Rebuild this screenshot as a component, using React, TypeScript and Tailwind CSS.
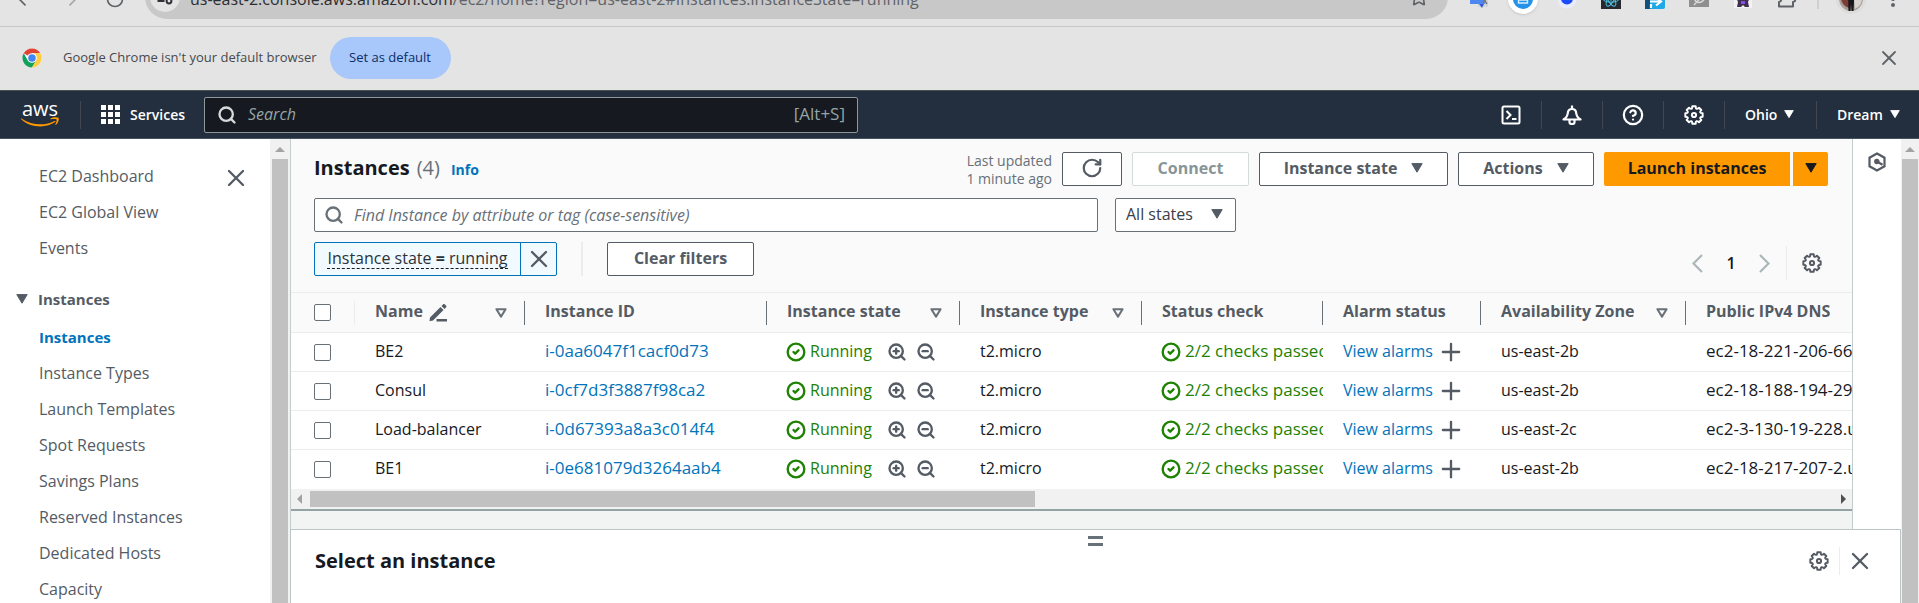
import React from 'react';
import {
  ArrowLeft,
  ArrowRight,
  CircleCheck,
  CircleHelp,
  Plus,
  Puzzle,
  RotateCw,
  Search,
  Star,
  X,
  ZoomIn,
  ZoomOut,
} from 'lucide-react';

const instances = [
  { name: 'BE2', id: 'i-0aa6047f1cacf0d73', zone: 'us-east-2b', dns: 'ec2-18-221-206-66.us-east-2.compute' },
  { name: 'Consul', id: 'i-0cf7d3f3887f98ca2', zone: 'us-east-2b', dns: 'ec2-18-188-194-29.us-east-2.compute' },
  { name: 'Load-balancer', id: 'i-0d67393a8a3c014f4', zone: 'us-east-2c', dns: 'ec2-3-130-19-228.us-east-2.compute' },
  { name: 'BE1', id: 'i-0e681079d3264aab4', zone: 'us-east-2b', dns: 'ec2-18-217-207-2.us-east-2.compute' },
];

const columns = [
  { label: 'Name', width: 'w-[170px]', filter: true, edit: true },
  { label: 'Instance ID', width: 'w-[242px]' },
  { label: 'Instance state', width: 'w-[193px]', filter: true },
  { label: 'Instance type', width: 'w-[182px]', filter: true },
  { label: 'Status check', width: 'w-[181px]' },
  { label: 'Alarm status', width: 'w-[158px]' },
  { label: 'Availability Zone', width: 'w-[205px]', filter: true },
  { label: 'Public IPv4 DNS', width: 'w-[300px]' },
];

const mainLinks = ['EC2 Dashboard', 'EC2 Global View', 'Events'];
const instanceLinks = [
  'Instances',
  'Instance Types',
  'Launch Templates',
  'Spot Requests',
  'Savings Plans',
  'Reserved Instances',
  'Dedicated Hosts',
  'Capacity',
];

// Eight rounded lobes around a ring.
const gearPath = (() => {
  const at = (deg: number, r: number) => {
    const a = (deg * Math.PI) / 180;
    return `${(10 + r * Math.cos(a)).toFixed(2)} ${(10 + r * Math.sin(a)).toFixed(2)}`;
  };
  let d = `M${at(-11, 8.8)}`;
  for (let i = 0; i < 8; i += 1) {
    const c = i * 45;
    d += `L${at(c + 11, 8.8)}Q${at(c + 22.5, 4.8)} ${at(c + 34, 8.8)}`;
  }
  return `${d}Z`;
})();

function Gear({ className = '' }: { className?: string }) {
  return (
    <svg viewBox="0 0 20 20" className={`size-5 ${className}`} fill="none" stroke="currentColor" strokeWidth="2" strokeLinejoin="round" aria-hidden="true">
      <path d={gearPath} />
      <circle cx="10" cy="10" r="2.1" />
    </svg>
  );
}

function Caret({ className = 'w-3' }: { className?: string }) {
  return (
    <svg viewBox="0 0 12 10" className={className} fill="currentColor" stroke="currentColor" strokeLinejoin="round" aria-hidden="true">
      <path d="M.8.6h10.4L6 9.2z" />
    </svg>
  );
}

function FilterMark() {
  return (
    <svg viewBox="0 0 12 10" className="w-3 shrink-0 text-[#687078]" fill="none" stroke="currentColor" strokeWidth="2" strokeLinejoin="round" aria-hidden="true">
      <path d="M1.4 1.2h9.2L6 8.6z" />
    </svg>
  );
}

function PageArrow({ d }: { d: string }) {
  return (
    <svg viewBox="0 0 11 19" className="h-[19px] w-[11px]" fill="none" stroke="currentColor" strokeWidth="2.2" aria-hidden="true">
      <path d={d} />
    </svg>
  );
}

function ChromeLogo() {
  return (
    <svg viewBox="0 0 48 48" className="size-5" aria-hidden="true">
      <circle cx="24" cy="24" r="23" fill="#fff" />
      <path d="M24 24 4.1 12.5A23 23 0 0 1 43.9 12.5H24z" fill="#e04234" />
      <path d="M4.1 12.5A23 23 0 0 0 24 47l10-17.2L24 24l-10 5.8z" fill="#12a15c" />
      <path d="M43.9 12.5A23 23 0 0 1 24 47l10-17.2L32 14.5l-8-2z" fill="#ffcd40" />
      <circle cx="24" cy="24" r="11.5" fill="#fff" />
      <circle cx="24" cy="24" r="9" fill="#4285f4" />
    </svg>
  );
}

function BrowserToolbar() {
  return (
    <div className="flex h-[27px] shrink-0 flex-col justify-end overflow-hidden border-b border-[#c6c6c6] bg-[#e4e4e4]">
      <div className="flex h-[54px] shrink-0 items-center text-[#5f6368]">
        <div className="flex w-[145px] items-center gap-[25px] pl-[15px]">
          <ArrowLeft className="size-5" />
          <ArrowRight className="size-5 text-[#a8a8a8]" />
          <RotateCw className="size-5" />
        </div>
        <div className="mb-1 flex h-11 flex-1 items-center rounded-full bg-[#c8c8c8] pl-[5px] pr-[19px]">
          <span className="mr-[10px] flex size-[30px] items-center justify-center rounded-full bg-[#e4e4e4] text-[#303236]">
            <svg viewBox="0 0 20 20" className="size-5" fill="none" stroke="currentColor" strokeWidth="2" aria-hidden="true">
              <circle cx="6" cy="6" r="2.4" />
              <path d="M10.5 6h7M2.5 14h7" />
              <circle cx="14" cy="14" r="2.4" />
            </svg>
          </span>
          <span className="flex-1 whitespace-nowrap pt-1 text-[16px] leading-6">
            <span className="text-[#2c2e31]">us-east-2.console.aws.amazon.com</span>
            /ec2/home?region=us-east-2#Instances:instanceState=running
          </span>
          <Star className="size-5" />
        </div>
        <div className="flex items-center pl-[9px]">
          <span className="flex w-11 justify-center">
            <svg viewBox="0 0 20 20" className="size-5" aria-hidden="true">
              <path d="M7 5h12v13H9z" fill="#d4d6da" />
              <path d="M1 1h12l3 14H1z" fill="#4d87f2" />
              <path d="m10 15 5 0-2 4z" fill="#2f5fd0" />
              <path d="m14 9 4 6m0-6-4 5" stroke="#777" strokeWidth="1.5" />
            </svg>
          </span>
          <span className="flex w-11 justify-center">
            <span className="flex size-[30px] items-center justify-center rounded-full bg-white shadow">
              <svg viewBox="0 0 20 20" className="size-5" aria-hidden="true">
                <circle cx="10" cy="10" r="10" fill="#2492e6" />
                <path d="M5.5 4h9v10h-9zM5.5 7.5h9M5.5 11h9" fill="none" stroke="#d6edff" strokeWidth="1.4" />
              </svg>
            </span>
          </span>
          <span className="flex w-11 justify-center">
            <svg viewBox="0 0 20 20" className="size-5" aria-hidden="true">
              <circle cx="10" cy="10" r="9.5" fill="#e8ecfb" />
              <circle cx="10" cy="9.500" r="6" fill="#1b4dfa" />
            </svg>
          </span>
          <span className="flex w-11 justify-center">
            <svg viewBox="0 0 20 20" className="size-5" fill="none" stroke="#4fc6e8" aria-hidden="true">
              <path d="M0 0h20v20H0z" fill="#26292e" stroke="none" />
              <ellipse cx="10" cy="10" rx="8" ry="3.2" />
              <ellipse cx="10" cy="10" rx="8" ry="3.2" transform="rotate(60 10 10)" />
              <ellipse cx="10" cy="10" rx="8" ry="3.2" transform="rotate(120 10 10)" />
              <circle cx="10" cy="10" r="1.2" />
            </svg>
          </span>
          <span className="flex w-11 justify-center">
            <svg viewBox="0 0 20 20" className="size-5" aria-hidden="true">
              <rect width="20" height="20" rx="2" fill="#1ea8e8" />
              <path d="M0 0h5v20H0z" fill="#124f7c" />
              <path d="M5 12.500h10m-4-4 5 4-5 4M6 15v4" fill="none" stroke="#fff" strokeWidth="2.2" />
            </svg>
          </span>
          <span className="flex w-11 justify-center">
            <svg viewBox="0 0 20 20" className="size-5" aria-hidden="true">
              <path d="M0 0h20v18H0z" fill="#8f8f8f" />
              <path d="m5 16 9-10M6 10c0 4 5 5 9 1" fill="none" stroke="#d9d9d9" strokeWidth="1.5" />
            </svg>
          </span>
          <span className="flex w-11 justify-center">
            <svg viewBox="0 0 20 20" className="size-5" aria-hidden="true">
              <path d="M1 0h18v19H1z" fill="#f3f1f4" />
              <path d="m3 8 7 2 7-2-2 5 1 5h-4l-2-2-2 2H4l1-5z" fill="#3d2f4f" />
              <path d="M8 12h4v3H8z" fill="#8a4be0" />
            </svg>
          </span>
          <span className="flex w-11 justify-center">
            <svg viewBox="0 0 20 20" className="size-5" fill="none" stroke="currentColor" strokeWidth="2" strokeLinejoin="round" aria-hidden="true">
              <path d="M2 17.500V13c3-.5 3-4.500 0-5V4h4.500c.5-3 4.500-3 5 0H16v4.500c3 .5 3 4 0 4.500v4.500z" />
            </svg>
          </span>
          <span className="ml-2 h-5 w-[2px] bg-[#cfcfcf]" />
          <span className="ml-[17px] flex size-[30px] items-center justify-center rounded-full bg-[#dcdcdc]">
            <svg viewBox="0 0 24 24" className="size-6" aria-hidden="true">
              <circle cx="12" cy="12" r="12" fill="#a99e98" />
              <path d="M2 12h8v9a12 12 0 0 1-8-9z" fill="#7d3b36" />
              <path d="M15 12h8a12 12 0 0 1-7 10z" fill="#d8d2cf" />
              <path d="M9 6h6v9l-.5 9h-2l-.5-7-.5 7h-2z" fill="#16171a" />
            </svg>
          </span>
          <span className="flex w-[53px] justify-center">
            <svg viewBox="0 0 4 20" className="h-5 w-1" fill="currentColor" aria-hidden="true">
              <circle cx="2" cy="4" r="2" />
              <circle cx="2" cy="10" r="2" />
              <circle cx="2" cy="16" r="2" />
            </svg>
          </span>
        </div>
      </div>
    </div>
  );
}

function DefaultBrowserBar() {
  return (
    <div className="flex h-[63px] shrink-0 items-center bg-[#e4e4e4] pb-px pl-[22px] pr-[18px]">
      <ChromeLogo />
      <span className="ml-[21px] text-[13px] text-[#47494d]">Google Chrome isn't your default browser</span>
      <button className="ml-[13px] h-[42px] w-[121px] rounded-full bg-[#a8c7fa] text-[13px] font-medium text-[#0b2e6b]">Set as default</button>
      <button className="ml-auto text-[#5f6368]" aria-label="Dismiss">
        <X className="size-6" strokeWidth={1.8} />
      </button>
    </div>
  );
}

function NavCell({ children, label }: { children: React.ReactNode; label: string }) {
  return (
    <button className="flex h-7 w-[61px] items-center justify-center border-r border-[#414750]" aria-label={label}>
      {children}
    </button>
  );
}

function ConsoleNav() {
  return (
    <header className="flex h-[49px] shrink-0 items-center border-y border-t-[#4a5350] border-b-[#46525f] bg-[#232f3e] text-white">
      <a href="#home" className="flex h-7 w-[81px] flex-col items-center border-r border-[#414750]" aria-label="Console home">
        <span className="text-[20px] leading-4">aws</span>
        <svg viewBox="0 0 38 10" className="w-[38px]" aria-hidden="true">
          <path d="M0 1.2c11 7.500 24 7.800 33.500 2.800.9-.4 1.500.5.700 1.100C25 11.500 9.500 11 .2 2.200c-.6-.6-.6-1.200-.2-1z" fill="#ff9900" />
          <path d="M29.500 1.600c2-1.400 6.500-1.700 8-.8.900.9-.2 5.300-2.600 7-.4.300-.8.100-.6-.3.600-1.300 1.700-4 1.200-4.900-.6-.8-3.800-.4-5.500-.4-.5-.1-.9-.3-.5-.6z" fill="#ff9900" />
        </svg>
      </a>
      <button className="flex items-center gap-[10px] pl-5 text-[14px] font-semibold">
        <svg viewBox="0 0 19 19" className="size-[19px]" fill="currentColor" aria-hidden="true">
          <path d="M0 0h5v5H0zM7 0h5v5H7zM14 0h5v5h-5zM0 7h5v5H0zM7 7h5v5H7zM14 7h5v5h-5zM0 14h5v5H0zM7 14h5v5H7zM14 14h5v5h-5z" />
        </svg>
        <span className="w-16 pb-px text-left">Services</span>
      </button>
      <label className="ml-[10px] flex h-9 w-[654px] items-center rounded-[2px] border border-[#8d9998] bg-[#16191f] px-3">
        <Search className="size-5 shrink-0 text-[#d5dbdb]" strokeWidth={2.8} />
        <input type="search" placeholder="Search" aria-label="Search services" className="ml-[11px] min-w-0 flex-1 bg-transparent pb-px text-[16px] italic outline-none placeholder:text-[#95a5a6]" />
        <span className="pb-px text-[17px] text-[#95a5a6]">[Alt+S]</span>
      </label>
      <div className="ml-auto flex items-center">
        <NavCell label="CloudShell">
          <svg viewBox="0 0 20 20" className="size-5" fill="none" stroke="currentColor" strokeWidth="2" aria-hidden="true">
            <rect x="1.5" y="1.5" width="17" height="17" rx="1.5" />
            <path d="m5.500 6 4 4-4 4M11 14h4.500" />
          </svg>
        </NavCell>
        <NavCell label="Notifications">
          <svg viewBox="0 0 20 20" className="size-5" fill="none" stroke="currentColor" strokeWidth="2.2" strokeLinejoin="round" aria-hidden="true">
            <path d="M1.500 14.500c2.500-1.500 4-3.500 4.300-6.500.2-2.500 1.700-4 4.200-4s4 1.500 4.200 4c.3 3 1.800 5 4.300 6.500zM10 .5V4" />
            <path d="M7.500 15v2.500c0 .8.800 1.500 2.500 1.500s2.500-.7 2.500-1.500V15" />
          </svg>
        </NavCell>
        <NavCell label="Help">
          <CircleHelp className="size-[22px]" strokeWidth={2.4} />
        </NavCell>
        <NavCell label="Settings">
          <Gear />
        </NavCell>
        <button className="flex h-7 w-[92px] items-center gap-[7px] border-r border-[#414750] pb-px pl-5 text-[14px] font-semibold">
          Ohio <Caret className="w-[10px]" />
        </button>
        <button className="flex h-7 w-[102px] items-center gap-[7px] pb-px pl-5 text-[14px] font-semibold">
          Dream <Caret className="w-[10px]" />
        </button>
      </div>
    </header>
  );
}

function VerticalScrollbar({ className }: { className: string }) {
  return (
    <div className={`flex shrink-0 flex-col items-center overflow-hidden bg-[#f1f1f1] ${className}`}>
      <span className="flex h-5 shrink-0 items-center text-[#a3a3a3]">
        <svg viewBox="0 0 10 5" className="w-[10px]" fill="currentColor" aria-hidden="true">
          <path d="M0 5 5 0l5 5z" />
        </svg>
      </span>
      <span className="w-4 flex-1 bg-[#c1c1c1]" />
    </div>
  );
}

function Sidebar() {
  return (
    <nav className="w-[270px] shrink-0 overflow-hidden bg-white pt-[25px] text-[16px] leading-6 text-[#545b64]">
      <div className="flex items-start justify-between pl-[39px] pr-5">
        <ul className="flex flex-col gap-3">
          {mainLinks.map((label) => (
            <li key={label}>
              <a href="#nav">{label}</a>
            </li>
          ))}
        </ul>
        <button aria-label="Close navigation">
          <X className="size-7" strokeWidth={2} />
        </button>
      </div>
      <button className="mt-[27px] flex items-center gap-[10px] pl-4 text-[15px] font-bold leading-6">
        <Caret /> Instances
      </button>
      <ul className="mt-[14px] flex flex-col gap-3 pl-[39px]">
        {instanceLinks.map((label, i) => (
          <li key={label}>
            <a href="#nav" className={i === 0 ? 'text-[15px] font-bold text-[#0073bb]' : ''}>
              {label}
            </a>
          </li>
        ))}
      </ul>
    </nav>
  );
}

const outlined = 'flex h-[34px] items-center justify-center rounded-[2px] border border-[#545b64] bg-white pb-[3px] text-[16px] font-bold text-[#545b64]';

function Toolbar() {
  return (
    <div className="flex flex-col bg-[#fafafa] pb-3 pl-[23px] pr-6 pt-[13px]">
      <div className="flex h-[34px] items-start justify-between">
        <h1 className="flex items-baseline text-[20px] font-bold leading-8 text-[#16191f]">
          Instances <span className="ml-[7px] font-normal text-[#687078]">(4)</span>
          <a href="#info" className="ml-[11px] text-[14px] text-[#0073bb]">
            Info
          </a>
        </h1>
        <div className="flex items-start gap-[10px]">
          <p className="text-right text-[14px] leading-[18px] text-[#687078]">
            Last updated
            <br />1 minute ago
          </p>
          <button className={`${outlined} w-[60px]`} aria-label="Refresh">
            <RotateCw className="size-[22px]" strokeWidth={2.4} />
          </button>
          <button disabled className="h-[34px] w-[117px] rounded-[2px] border border-[#d5dbdb] bg-white pb-[3px] text-[16px] font-bold text-[#879596]">
            Connect
          </button>
          <button className={`${outlined} w-[189px] gap-[14px]`}>
            Instance state <Caret />
          </button>
          <button className={`${outlined} w-[136px] gap-[14px]`}>
            Actions <Caret />
          </button>
          <div className="flex gap-[3px] text-[#16191f]">
            <button className="h-[34px] w-[186px] rounded-l-[2px] bg-[#ff9900] pb-[3px] text-[16px] font-bold">Launch instances</button>
            <button className="flex h-[34px] w-[35px] items-center justify-center rounded-r-[2px] bg-[#ff9900] pb-[3px]" aria-label="More launch options">
              <Caret />
            </button>
          </div>
        </div>
      </div>
      <div className="mt-3 flex gap-[17px]">
        <label className="flex h-[34px] w-[784px] items-center rounded-[2px] border border-[#687078] bg-white px-[9px]">
          <Search className="size-5 shrink-0 text-[#687078]" strokeWidth={2.8} />
          <input type="search" aria-label="Find Instance" placeholder="Find Instance by attribute or tag (case-sensitive)" className="ml-[10px] min-w-0 flex-1 bg-transparent pb-px text-[16px] italic outline-none placeholder:text-[#687078]" />
        </label>
        <div className="relative">
          <select aria-label="Instance states" className="h-[34px] w-[121px] appearance-none rounded-[2px] border border-[#687078] bg-white pb-[2px] pl-[10px] text-[16px] text-[#3a4048] outline-none">
            <option>All states</option>
          </select>
          <Caret className="pointer-events-none absolute right-[13px] top-[11px] w-3 text-[#545b64]" />
        </div>
      </div>
      <div className="mt-[10px] flex h-[38px] items-start">
        <div className="flex h-[34px] items-center rounded-[2px] border border-[#0073bb] bg-[#f1faff]">
          <button className="flex h-full w-[205px] items-center justify-center pb-px text-[16px] text-[#2c323a]">
            <span className="whitespace-nowrap border-b border-dashed border-[#16191f] leading-5">
              Instance state <b>=</b> running
            </span>
          </button>
          <button className="flex h-full w-9 items-center justify-center border-l border-[#0073bb] text-[#545b64]" aria-label="Remove filter">
            <X className="size-7" strokeWidth={2} />
          </button>
        </div>
        <span className="mx-6 h-[34px] w-[2px] bg-[#eaeded]" />
        <button className={`${outlined} w-[147px]`}>Clear filters</button>
        <div className="ml-auto flex h-[34px] items-center self-end">
          <button className="text-[#aab7b8]" aria-label="Previous page">
            <PageArrow d="M10 1 1.500 9.500 10 18" />
          </button>
          <span className="w-14 pb-px text-center text-[16px] font-semibold text-[#16191f]">1</span>
          <button className="text-[#aab7b8]" aria-label="Next page">
            <PageArrow d="m1 1 8.500 8.500L1 18" />
          </button>
          <span className="ml-4 h-full w-px bg-[#eaeded]" />
          <button className="ml-[15px] mr-[6px] text-[#545b64]" aria-label="Preferences">
            <Gear />
          </button>
        </div>
      </div>
    </div>
  );
}

function Tick({ label }: { label: string }) {
  return <input type="checkbox" aria-label={label} className="block size-[17px] appearance-none rounded-[2px] border border-[#687078] bg-white" />;
}

function InstancesTable() {
  return (
    <div className="overflow-hidden">
      <table className="w-[1695px] table-fixed border-collapse text-left text-[16px] leading-6">
        <thead>
          <tr className="h-[40px] border-y border-[#eaeded] bg-[#fafafa] text-[#545b64]">
            <th className="w-[64px] p-0">
              <div className="flex h-6 items-center border-r border-[#eaeded] pl-[23px]">
                <Tick label="Select all instances" />
              </div>
            </th>
            {columns.map((col) => (
              <th key={col.label} className={`${col.width} p-0 font-bold`}>
                <div className="flex h-6 items-center border-r border-[#687078] pl-5 pr-[17px]">
                  <span className="whitespace-nowrap pb-1">{col.label}</span>
                  {col.edit && (
                    <svg viewBox="0 0 18 18" className="ml-[6px] size-[18px]" fill="currentColor" aria-hidden="true">
                      <path d="M1 13.500 11.500 3l3 3L4 16.500.500 17.200zM12.500 2l1.700-1.700c.6-.5 1.200-.4 1.700.1l1.100 1.100c.5.500.6 1.100.1 1.700L15.500 5zM7.500 15H18v2.400H7.500z" />
                    </svg>
                  )}
                  {col.filter && (
                    <button className="ml-auto" aria-label={`Sort by ${col.label}`}>
                      <FilterMark />
                    </button>
                  )}
                </div>
              </th>
            ))}
          </tr>
        </thead>
        <tbody className="bg-white text-[#16191f]">
          {instances.map((row) => (
            <tr key={row.id} className="h-[39px] border-b border-[#eaeded] last:border-b-0">
              <td className="p-0 pl-[23px]">
                <Tick label={`Select ${row.name}`} />
              </td>
              <td className="p-0 pb-[2px] pl-5">{row.name}</td>
              <td className="p-0 pb-[2px] pl-5 text-[17px]">
                <a href="#instance" className="text-[#0073bb]">
                  {row.id}
                </a>
              </td>
              <td className="p-0 pl-[19px]">
                <div className="flex items-center text-[#1d8102]">
                  <CircleCheck className="size-5 shrink-0" strokeWidth={2.8} />
                  <span className="ml-1 w-[66px] pb-[2px]">Running</span>
                  <button className="ml-[11px] text-[#545b64]" aria-label="Include this value">
                    <ZoomIn className="size-5" strokeWidth={2.8} />
                  </button>
                  <button className="ml-[9px] text-[#545b64]" aria-label="Exclude this value">
                    <ZoomOut className="size-5" strokeWidth={2.8} />
                  </button>
                </div>
              </td>
              <td className="p-0 pb-[2px] pl-5">t2.micro</td>
              <td className="p-0 pl-[19px]">
                <div className="flex items-center overflow-hidden whitespace-nowrap text-[#1d8102]">
                  <CircleCheck className="size-5 shrink-0" strokeWidth={2.8} />
                  <span className="ml-1 pb-[2px] text-[17px]">2/2 checks passed</span>
                </div>
              </td>
              <td className="p-0 pl-5">
                <div className="flex items-center whitespace-nowrap">
                  <a href="#alarms" className="w-[94px] pb-[2px] text-[#0073bb]">
                    View alarms
                  </a>
                  <button className="text-[#545b64]" aria-label="Create alarm">
                    <Plus className="size-7" strokeWidth={2} />
                  </button>
                </div>
              </td>
              <td className="p-0 pb-[2px] pl-5">{row.zone}</td>
              <td className="whitespace-nowrap p-0 pb-[2px] pl-5 text-[17px]">{row.dns}</td>
            </tr>
          ))}
        </tbody>
      </table>
    </div>
  );
}

function HorizontalScrollbar() {
  return (
    <div className="flex h-5 items-center justify-between bg-[#f1f1f1] px-[6px]">
      <svg viewBox="0 0 5 10" className="h-[10px] w-[5px] shrink-0" fill="#a3a3a3" aria-hidden="true">
        <path d="M5 0v10L0 5z" />
      </svg>
      <span className="mx-2 flex h-4 flex-1">
        <span className="h-full flex-[10] bg-[#c1c1c1]" />
        <span className="flex-[11]" />
      </span>
      <svg viewBox="0 0 5 10" className="h-[10px] w-[5px] shrink-0" fill="#505050" aria-hidden="true">
        <path d="M0 0v10l5-5z" />
      </svg>
    </div>
  );
}

function SplitPanel() {
  return (
    <section className="flex flex-1 flex-col border-x border-t border-[#bcc6c7] bg-white">
      <div className="flex justify-center pt-[6px]">
        <button className="flex h-[10px] w-[15px] flex-col justify-between" aria-label="Resize panel">
          <span className="h-[3px] w-full bg-[#687078]" />
          <span className="h-[3px] w-full bg-[#687078]" />
        </button>
      </div>
      <div className="flex items-center pl-6 pr-[26px]">
        <h2 className="pb-px text-[20px] font-bold leading-[30px] text-[#16191f]">Select an instance</h2>
        <div className="ml-auto flex items-center text-[#545b64]">
          <button aria-label="Panel preferences">
            <Gear />
          </button>
          <span className="ml-[10px] mr-[6px] h-7 w-px bg-[#eaeded]" />
          <button aria-label="Close panel">
            <X className="size-7" strokeWidth={2} />
          </button>
        </div>
      </div>
    </section>
  );
}

export default function App() {
  return (
    <div className="flex h-screen flex-col overflow-hidden bg-white font-['Open_Sans','Noto_Sans',sans-serif]">
      <BrowserToolbar />
      <DefaultBrowserBar />
      <ConsoleNav />
      <div className="flex min-h-0 flex-1">
        <Sidebar />
        <VerticalScrollbar className="w-5" />
        <div className="flex min-w-0 flex-1 flex-col">
          <div className="flex shrink-0">
            <main className="min-w-0 flex-1 border-x border-[#c5cecf] bg-[#f2f3f3]">
              <Toolbar />
              <InstancesTable />
              <HorizontalScrollbar />
              <div className="h-5 border-t-2 border-[#95a3a5]" />
            </main>
            <aside className="flex w-12 shrink-0 justify-center bg-white pt-[13px] text-[#545b64]">
              <svg viewBox="0 0 18 20" className="h-5 w-[18px]" fill="none" stroke="currentColor" strokeWidth="2.2" aria-hidden="true">
                <path d="M9 1.500 16.500 5.700v8.600L9 18.500l-7.500-4.200V5.700z" />
                <path d="m9 9.500 5.500 3.200" />
                <circle cx="8.8" cy="9.5" r="1.6" fill="currentColor" />
              </svg>
            </aside>
          </div>
          <SplitPanel />
        </div>
        <VerticalScrollbar className="w-[18px]" />
      </div>
    </div>
  );
}
